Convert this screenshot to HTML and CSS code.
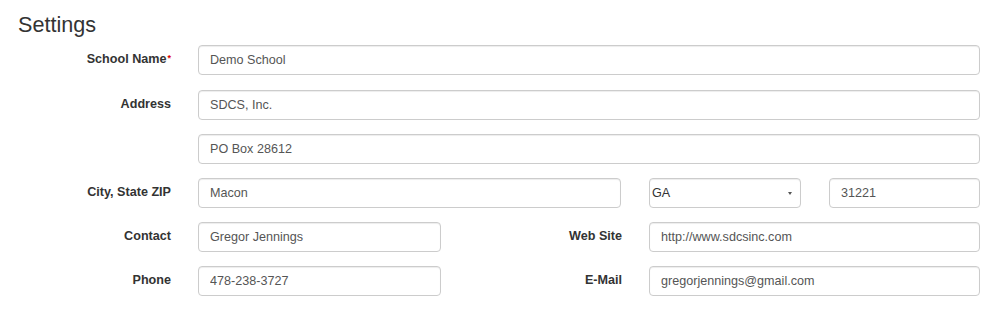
FILE: index.html
```html
<!DOCTYPE html>
<html lang="en">
<head>
  <meta charset="UTF-8" />
  <meta name="viewport" content="width=device-width, initial-scale=1" />
  <title>Settings</title>
  <link rel="stylesheet" href="styles.css">
</head>
<body>
  <div class="page">
    <h1 class="baslik">Settings</h1>
    <form class="ayarlar">
      <label class="etiket">School Name<sup class="zorunlu">*</sup></label>
      <input class="alan" type="text" value="Demo School">

      <label class="etiket">Address</label>
      <div class="adres">
        <input class="alan" type="text" value="SDCS, Inc.">
        <input class="alan" type="text" value="PO Box 28612">
      </div>

      <label class="etiket">City, State ZIP</label>
      <div class="sehir">
        <input class="alan" type="text" value="Macon">
        <span class="secim">
          <select class="alan">
            <option>GA</option>
          </select>
        </span>
        <input class="alan" type="text" value="31221">
      </div>

      <label class="etiket">Contact</label>
      <div class="ikili">
        <input class="alan" type="text" value="Gregor Jennings">
        <label class="etiket">Web Site</label>
        <input class="alan" type="text" value="http://www.sdcsinc.com">
      </div>

      <label class="etiket">Phone</label>
      <div class="ikili">
        <input class="alan" type="text" value="478-238-3727">
        <label class="etiket">E-Mail</label>
        <input class="alan" type="text" value="gregorjennings@gmail.com">
      </div>
    </form>
  </div>
</body>
</html>
```

FILE: styles.css
```css
body {
  margin: 0;
  padding: 0;
  background: #fff;
  font-family: "Liberation Sans", Arial, sans-serif;
  color: #333;
}

.page {
  padding: 13px 19px 0 0;
}

.baslik {
  margin: 0 0 8px 18px;
  font-size: 21.6px;
  font-weight: normal;
  line-height: 1.1;
  color: #333;
}

.ayarlar {
  display: grid;
  grid-template-columns: 171px 1fr;
  column-gap: 27px;
  row-gap: 14px;
}

.ayarlar > .alan:first-of-type {
  margin-bottom: 1px;
}

.etiket {
  padding-top: 5px;
  font-size: 12.6px;
  font-weight: bold;
  line-height: 18px;
  text-align: right;
  color: #333;
}

.zorunlu {
  font-size: 9px;
  color: #d00;
  vertical-align: top;
  position: relative;
  top: -1px;
  margin-left: 1px;
}

.alan {
  box-sizing: border-box;
  width: 100%;
  height: 30px;
  margin: 0;
  padding: 5px 11px;
  font-family: "Liberation Sans", Arial, sans-serif;
  font-size: 12.6px;
  color: #555;
  background: #fff;
  border: 1px solid #ccc;
  border-radius: 4px;
  box-shadow: inset 0 1px 1px rgba(0, 0, 0, 0.075);
  outline: none;
}

.adres {
  display: flex;
  flex-direction: column;
  gap: 14px;
}

.sehir {
  display: grid;
  grid-template-columns: 1fr 152px 151px;
  column-gap: 28px;
}

.secim {
  position: relative;
  display: block;
}

.secim select {
  appearance: none;
  -webkit-appearance: none;
  padding: 0 2px;
  color: #333;
}

.secim::after {
  content: "";
  position: absolute;
  right: 9px;
  top: 14px;
  border-left: 2.5px solid transparent;
  border-right: 2.5px solid transparent;
  border-top: 3px solid #555;
}

.ikili {
  display: grid;
  grid-template-columns: 243px 1fr 331px;
  column-gap: 27px;
}
```
